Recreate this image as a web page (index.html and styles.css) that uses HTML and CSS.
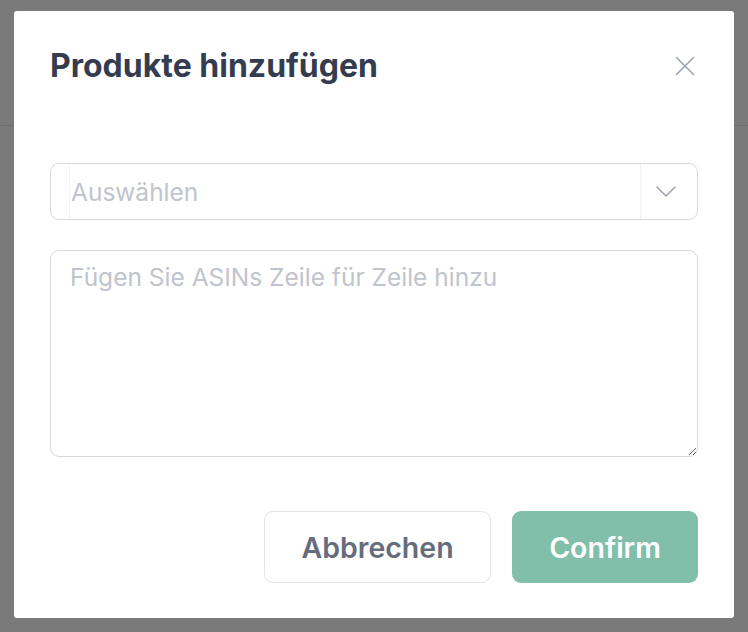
FILE: index.html
```html
<!DOCTYPE html>
<html lang="de">
<head>
<meta charset="utf-8">
<title>Produkte hinzufügen</title>
<link rel="stylesheet" href="styles.css">
</head>
<body>
<div class="page">
  <div class="page-header"></div>
</div>
<div class="overlay">
  <div class="modal">
    <div class="modal-head">
      <h2 class="modal-title">Produkte hinzufügen</h2>
      <button class="close" aria-label="Schließen">
        <svg width="24" height="24" viewBox="0 0 24 24"><path d="M3.5 3.5 L20.5 20.5 M20.5 3.5 L3.5 20.5" stroke="#9ca3af" stroke-width="1.6" fill="none" stroke-linecap="round"/></svg>
      </button>
    </div>
    <div class="select">
      <div class="select-input">Auswählen</div>
      <div class="select-arrow">
        <svg width="20" height="11" viewBox="0 0 20 11"><path d="M1 1 L10 10 L19 1" stroke="#9ca3af" stroke-width="1.5" fill="none" stroke-linejoin="round" stroke-linecap="round"/></svg>
      </div>
    </div>
    <textarea class="asins" placeholder="Fügen Sie ASINs Zeile für Zeile hinzu"></textarea>
    <div class="actions">
      <button class="btn btn-cancel">Abbrechen</button>
      <button class="btn btn-confirm">Confirm</button>
    </div>
  </div>
</div>
</body>
</html>
```
FILE: styles.css
```css
html, body {
  margin: 0;
  padding: 0;
}
body {
  font-family: Inter, "Noto Sans", sans-serif;
  background: #ffffff;
  width: 748px;
  height: 632px;
  overflow: hidden;
}
.page-header {
  height: 126px;
  border-bottom: 1px solid #e3e5e8;
  box-sizing: border-box;
}
.overlay {
  position: fixed;
  inset: 0;
  background: rgba(0, 0, 0, 0.52);
  padding: 11px 0 0 14px;
}
.modal {
  width: 720px;
  height: 607px;
  box-sizing: border-box;
  background: #ffffff;
  border-radius: 3px;
  padding: 36px 36px 35px 36px;
  display: flex;
  flex-direction: column;
}
.modal-head {
  display: flex;
  align-items: center;
  justify-content: space-between;
  height: 38px;
}
.modal-title {
  margin: 0;
  font-size: 32px;
  font-weight: 700;
  color: #343d4f;
  line-height: 38px;
  letter-spacing: 0;
}
.close {
  border: 0;
  background: none;
  padding: 0;
  width: 24px;
  height: 24px;
  margin-right: 1px;
  display: flex;
}
.select {
  margin-top: 78px;
  height: 57px;
  box-sizing: border-box;
  border: 1.5px solid #d6d9de;
  border-radius: 9px;
  display: flex;
}
.select-input {
  flex: 1;
  margin-left: 18px;
  border-left: 1px solid #f3f4f6;
  padding-left: 1px;
  display: flex;
  align-items: center;
  font-size: 24.5px;
  color: #c0c4cc;
}
.select-arrow {
  width: 57px;
  box-sizing: border-box;
  padding-right: 6px;
  border-left: 1px solid #f1f2f4;
  display: flex;
  align-items: center;
  justify-content: center;
}
.asins {
  margin-top: 30px;
  height: 207px;
  box-sizing: border-box;
  border: 1.5px solid #d6d9de;
  border-radius: 9px;
  padding: 10px 19px;
  font-family: Inter, "Noto Sans", sans-serif;
  font-size: 24.5px;
  line-height: 32px;
  color: #333c4e;
  resize: vertical;
  outline: none;
}
.asins::placeholder {
  color: #c0c4cc;
}
.actions {
  margin-top: auto;
  display: flex;
  justify-content: flex-end;
  gap: 21px;
}
.btn {
  height: 72px;
  box-sizing: border-box;
  border-radius: 9px;
  font-family: Inter, "Noto Sans", sans-serif;
  font-size: 28.5px;
  font-weight: 600;
  padding: 0;
}
.btn-cancel {
  width: 227px;
  background: #ffffff;
  border: 1.5px solid #e2e4e8;
  color: #656d7d;
}
.btn-confirm {
  width: 186px;
  background: #81bfab;
  border: 0;
  color: #ffffff;
}
```
